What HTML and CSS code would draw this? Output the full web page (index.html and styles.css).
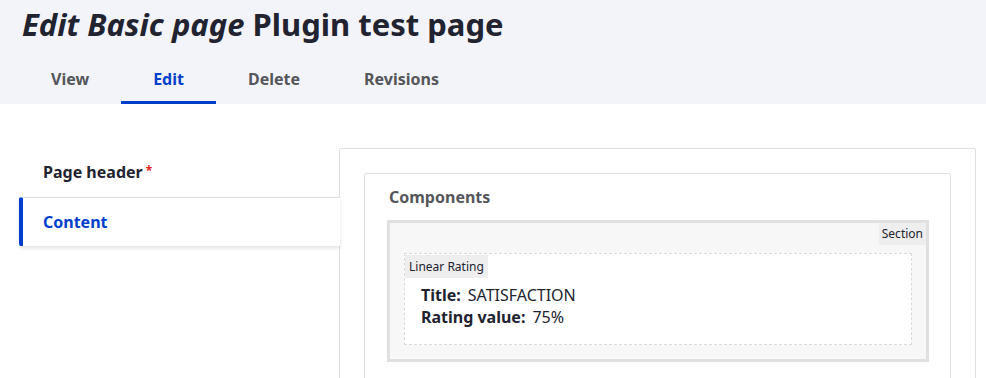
FILE: index.html
```html
<!DOCTYPE html>
<html lang="en">
<head>
<meta charset="UTF-8">
<meta name="viewport" content="width=device-width, initial-scale=1.0">
<title>Edit Basic page Plugin test page</title>
<link rel="stylesheet" href="styles.css">
</head>
<body>
<div class="page-head">
    <h1 class="page-title"><em>Edit Basic page</em> Plugin test page</h1>
    <ul class="tabs">
        <li class="tab">View</li>
        <li class="tab active">Edit</li>
        <li class="tab">Delete</li>
        <li class="tab">Revisions</li>
    </ul>
</div>

<div class="layout">
    <ul class="vtabs">
        <li class="vtab">Page header<span class="required">*</span></li>
        <li class="vtab selected">Content</li>
    </ul>

    <div class="panel">
        <div class="fieldset">
            <div class="fieldset-title">Components</div>
            <div class="section">
                <div class="section-head">
                    <span class="section-label">Section</span>
                </div>
                <div class="component">
                    <div class="component-label">Linear Rating</div>
                    <div class="rating">
                        <div><span class="field-label">Title:</span>SATISFACTION</div>
                        <div><span class="field-label">Rating value:</span>75%</div>
                    </div>
                </div>
            </div>
        </div>
    </div>
</div>
</body>
</html>
```

FILE: styles.css
```css
body {
    margin: 0;
    font-family: "Noto Sans", "Open Sans", sans-serif;
    color: #222330;
    background: #fff;
}

ul {
    list-style: none;
    margin: 0;
    padding: 0;
}

.page-head {
    background: #f3f4f9;
    padding: 4px 19px 0;
}

.page-title {
    margin: 0 0 0 3px;
    font-size: 31px;
    line-height: 40px;
    font-weight: 700;
}

.page-title em {
    font-weight: 700;
}

.tabs {
    display: flex;
    margin-top: 12px;
}

.tab {
    padding: 0 32px;
    height: 45px;
    line-height: 46px;
    font-size: 16px;
    font-weight: 700;
    color: #55565b;
    border-bottom: 3px solid transparent;
}

.tab.active {
    color: #003ecc;
    border-bottom-color: #003ecc;
}

.layout {
    display: flex;
    align-items: flex-start;
    padding: 44px 10px 0 19px;
}

.vtabs {
    width: 321px;
    flex-shrink: 0;
    margin-right: -1px;
    position: relative;
    z-index: 1;
}

.vtab {
    height: 49px;
    line-height: 46px;
    padding-left: 24px;
    font-size: 16px;
    font-weight: 700;
    color: #222330;
}

.required {
    color: #dc2323;
    font-size: 12px;
    margin-left: 3px;
    vertical-align: 3px;
}

.vtab.selected {
    background: #fff;
    color: #003ecc;
    border-top: 1px solid #dedfe4;
    border-left: 4px solid #003ecc;
    border-radius: 2px 0 0 2px;
    padding-left: 20px;
    height: 48px;
    line-height: 48px;
    box-shadow: 0 2px 4px rgba(0, 0, 0, 0.12);
}

.panel {
    flex: 1;
    border: 1px solid #dedfe4;
    border-radius: 2px;
    padding: 24px;
    min-height: 260px;
}

.fieldset {
    border: 1px solid #dedfe4;
    border-radius: 2px;
    padding: 0 21px 40px 22px;
}

.fieldset-title {
    padding: 12px 0 0 2px;
    height: 34px;
    font-size: 16px;
    font-weight: 700;
    color: #55565b;
}

.section {
    background: #f7f7f7;
    border: 3px solid #e0e0e0;
    padding: 0 14px 14px;
}

.section-head {
    display: flex;
    justify-content: flex-end;
    margin: 0 -14px 8px 0;
}

.section-label,
.component-label {
    display: inline-block;
    background: #eeeeee;
    font-size: 12px;
    color: #222330;
}

.section-label {
    padding: 0 3px;
    height: 22px;
    line-height: 22px;
}

.component {
    background: #fff;
    border: 1px dashed #dadada;
}

.component-label {
    padding: 0 4px;
    height: 23px;
    line-height: 23px;
}

.rating {
    padding: 6px 16px 16px;
    font-size: 16px;
    line-height: 22px;
}

.field-label {
    font-weight: 700;
    margin-right: 7px;
}
```
